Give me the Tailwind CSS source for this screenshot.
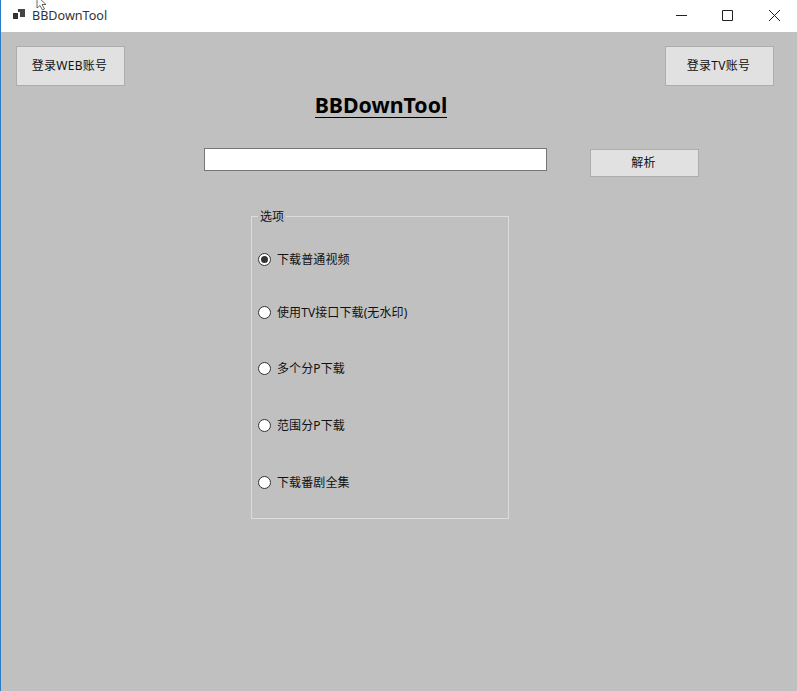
<!DOCTYPE html>
<html lang="zh">
<head>
    <meta charset="utf-8">
    <title>BBDownTool</title>
    <script src="https://cdn.jsdelivr.net/npm/@tailwindcss/browser@4"></script>
</head>
<body class="relative w-[797px] h-[691px] overflow-hidden bg-[#c0c0c0] font-['Noto_Sans','Noto_Sans_CJK_SC',sans-serif] text-[12px] text-[#111]">
<!-- title bar -->
<div class="flex items-center h-8 bg-white pl-[13px]">
    <svg class="w-[13px] h-[14px] mr-[6px]" viewBox="0 0 13 14"><path d="M0 4h5v6H0z" fill="#333"/><path d="M5 0h7v8H7V3H5z" fill="#444"/></svg>
    <span class="text-[12.6px] text-[#333]">BBDownTool</span>
    <div class="ml-auto flex items-center">
        <svg class="w-[46px] h-8" viewBox="0 0 46 32"><path d="M17 15.500h11" stroke="#222" fill="none"/></svg>
        <svg class="w-[46px] h-8" viewBox="0 0 46 32"><path d="M17.500 10.500h10v10h-10z" stroke="#222" fill="none"/></svg>
        <svg class="w-[46px] h-8" viewBox="0 0 46 32"><path d="M18 10l11 11M29 10L18 21" stroke="#222" fill="none"/></svg>
    </div>
</div>
<!-- login buttons -->
<div class="flex justify-between pl-4 pr-[23px] pt-[14px]">
    <button class="w-[109px] h-10 pr-[2px] bg-[#e1e1e1] border border-[#adadad] tracking-[0.25px]">登录WEB账号</button>
    <button class="w-[109px] h-10 pr-[2px] bg-[#e1e1e1] border border-[#adadad] tracking-[0.25px]">登录TV账号</button>
</div>
<!-- heading -->
<div class="flex justify-center mt-[7px]">
    <h1 class="ml-[-35px] text-[21.3px] leading-[24px] font-bold text-black border-b border-black">BBDownTool</h1>
</div>
<!-- url row -->
<div class="flex items-start pl-[204px] mt-[30px]">
    <input type="text" class="w-[343px] h-[23px] bg-white border border-[#767676]">
    <button class="ml-[43px] mt-px w-[109px] h-[28px] pr-[2px] bg-[#e1e1e1] border border-[#adadad] tracking-[0.25px]">解析</button>
</div>
<!-- options -->
<fieldset class="relative ml-[251px] mt-[39px] w-[258px] h-[303px] border border-[#dcdcdc] pl-[6px]">
    <legend class="absolute left-[6px] top-[-8px] px-[2px] leading-[16px] bg-[#c0c0c0]">选项</legend>
    <div class="flex flex-col pt-[35px] tracking-[0.1px]">
        <label class="flex items-center h-4 gap-[6px]"><span class="flex items-center justify-center w-[13px] h-[13px] -translate-y-px rounded-full bg-white border border-[#333]"><span class="w-[7px] h-[7px] rounded-full bg-[#333]"></span></span>下载普通视频</label>
        <label class="flex items-center h-4 gap-[6px] mt-[37px]"><span class="w-[13px] h-[13px] -translate-y-px rounded-full bg-white border border-[#333]"></span>使用TV接口下载(无水印)</label>
        <label class="flex items-center h-4 gap-[6px] mt-[40px]"><span class="w-[13px] h-[13px] -translate-y-px rounded-full bg-white border border-[#333]"></span>多个分P下载</label>
        <label class="flex items-center h-4 gap-[6px] mt-[41px]"><span class="w-[13px] h-[13px] -translate-y-px rounded-full bg-white border border-[#333]"></span>范围分P下载</label>
        <label class="flex items-center h-4 gap-[6px] mt-[41px]"><span class="w-[13px] h-[13px] -translate-y-px rounded-full bg-white border border-[#333]"></span>下载番剧全集</label>
    </div>
</fieldset>
<!-- window edge and captured mouse pointer -->
<div class="absolute left-0 top-0 w-px h-full bg-[#2b7cc4]"></div>
<svg class="absolute left-[36px] top-0 w-[14px] h-[11px]" viewBox="0 0 14 11"><path d="M1 -4v12l3-2.500 2.500 4.500 2-1-2.500-4.500h4z" fill="#fff" stroke="#444" stroke-width="0.8"/></svg>
</body>
</html>
